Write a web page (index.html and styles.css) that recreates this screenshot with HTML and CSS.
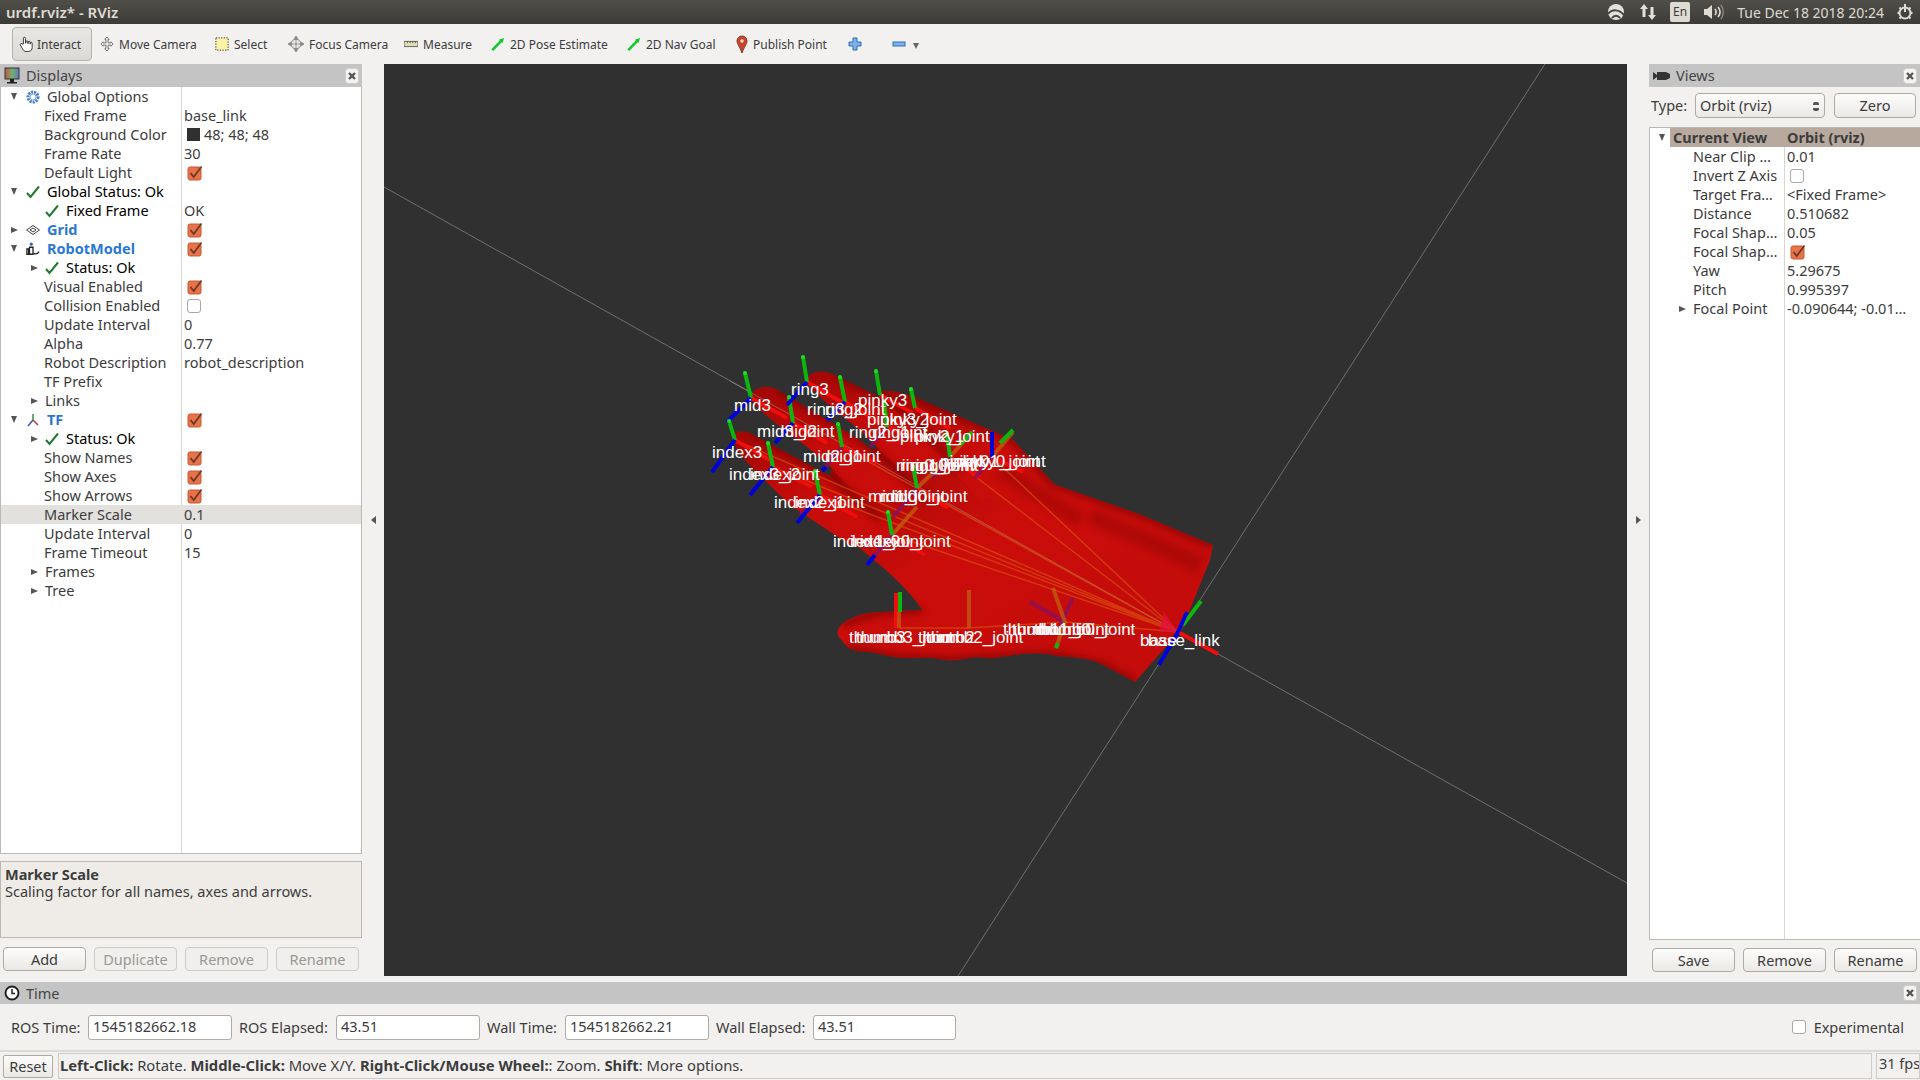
FILE: index.html
```html
<!DOCTYPE html>
<html lang="en">
<head>
<meta charset="utf-8">
<title>urdf.rviz* - RViz</title>
<link rel="stylesheet" href="styles.css">
</head>
<body>
<svg class="defs" aria-hidden="true">
  <symbol id="ok" viewBox="0 0 14 14"><path d="M1 8l3.5 4L13 1.5" fill="none" stroke="#1f7a2e" stroke-width="2"/></symbol>
  <symbol id="tick" viewBox="0 0 16 16"><rect x="1" y="2" width="13" height="13" rx="2" fill="#e8734a" stroke="#c9592f"/><path d="M3.5 8l3.2 4L14.5 1.5" fill="none" stroke="#6b3a28" stroke-width="1.8"/></symbol>
  <symbol id="cross" viewBox="0 0 14 16"><rect x=".5" y=".5" width="13" height="15" rx="3" fill="#f4f3f2" stroke="#d0cec9"/><path d="M4 5l6 6M10 5l-6 6" stroke="#555" stroke-width="2.4"/></symbol>
</svg>

<header class="topbar">
  <div class="wintitle">urdf.rviz* - RViz</div>
  <div class="tray">
    <svg class="t1" viewBox="0 0 18 18"><circle cx="9" cy="9" r="8" fill="#e4e1da"/><path d="M1 11c4-5 11-5 16 1M5 15c2-3 6-3 8 0" fill="none" stroke="#45433d" stroke-width="2"/></svg>
    <svg class="t2" viewBox="0 0 18 18"><path d="M5 1l4 5H6.500v8h-3V6H1zM13 17l4-5h-2.500V4h-3v8H9z" fill="#e4e1da"/></svg>
    <span class="lang">En</span>
    <svg class="t3" viewBox="0 0 22 18"><path d="M1 6h3l5-4v14l-5-4H1z" fill="#dfdbd2"/><path d="M12 6c1.500 2 1.500 4 0 6M15 4c2.500 3 2.500 7 0 10" fill="none" stroke="#dfdbd2" stroke-width="1.600"/><path d="M18 2c3 4 3 10 0 14" fill="none" stroke="#8a8780" stroke-width="1.400"/></svg>
    <span class="clock">Tue Dec 18 2018 20:24</span>
    <svg class="t4" viewBox="0 0 18 18"><circle cx="9" cy="10" r="5.500" fill="none" stroke="#dfdbd2" stroke-width="2"/><path d="M9 1v8M1.500 10h2M14.500 10h2M3.500 4.500l1.500 1.500M14.500 4.500L13 6M3.500 15.500L5 14M14.500 15.500L13 14" stroke="#dfdbd2" stroke-width="2"/></svg>
  </div>
</header>

<nav class="toolbar">
  <div class="tool active"><svg class="ic" viewBox="0 0 16 18"><path d="M5 9V2.500a1.200 1.200 0 0 1 2.400 0V8h.5V6.500a1.100 1.100 0 0 1 2.200 0V8.500h.4V7a1.100 1.100 0 0 1 2.200 0v2h.3V8a1 1 0 0 1 2 0v5c0 2.500-1.500 4.500-4 4.500H8c-2 0-3-1-4-3L1.500 10c-.6-1.200 1.200-2.200 2-1z" fill="#fff" stroke="#222"/></svg>Interact</div>
  <div class="tool"><svg class="ic" viewBox="0 0 16 18"><path d="M8 1l2.500 3H9.200v3.700h3.300V6.500L15 9l-2.500 2.500v-1.200H9.200V14h1.300L8 17l-2.500-3h1.300v-3.700H3.500v1.200L1 9l2.500-2.500v1.200h3.300V4H5.500z" fill="#eee" stroke="#666"/></svg>Move Camera</div>
  <div class="tool"><svg class="ic" viewBox="0 0 16 16"><rect x="1" y="1" width="14" height="14" fill="#fbf3a8" stroke="#222" stroke-dasharray="1.500 1.500"/></svg>Select</div>
  <div class="tool"><svg class="ic wide" viewBox="0 0 18 18"><circle cx="9" cy="9" r="5.500" fill="#e8e8e8" stroke="#777"/><path d="M9 0l2 3H7zM9 18l2-3H7zM0 9l3-2v4zM18 9l-3-2v4zM9 3v12M3 9h12" fill="#999" stroke="#777" stroke-width=".8"/></svg>Focus Camera</div>
  <div class="tool"><svg class="ic" viewBox="0 0 16 16"><rect x="0" y="5" width="16" height="6" fill="#e3dcae" stroke="#555"/><path d="M4 5v2M7 5v2M10 5v2M13 5v2" stroke="#555"/></svg>Measure</div>
  <div class="tool"><svg class="ic" viewBox="0 0 16 16"><path d="M1.500 15L13 3" stroke="#12c928" stroke-width="3"/><path d="M15 1l-2 6-4-4z" fill="#12c928"/></svg>2D Pose Estimate</div>
  <div class="tool"><svg class="ic" viewBox="0 0 16 16"><path d="M1.500 15L13 3" stroke="#12c928" stroke-width="3"/><path d="M15 1l-2 6-4-4z" fill="#12c928"/></svg>2D Nav Goal</div>
  <div class="tool"><svg class="ic narrow" viewBox="0 0 12 18"><path d="M6 18C4 12 1 9 1 6a5 5 0 0 1 10 0c0 3-3 6-5 12z" fill="#c8452d" stroke="#8a3a22"/><circle cx="6" cy="6" r="1.800" fill="#f5d5c5"/></svg>Publish Point</div>
  <div class="tool"><svg class="ic" viewBox="0 0 14 14"><path d="M5 1h4v4h4v4H9v4H5V9H1V5h4z" fill="#7fb0e8" stroke="#2f6fb8"/></svg></div>
  <div class="tool"><svg class="ic" viewBox="0 0 14 14"><rect x="1" y="5" width="12" height="4" fill="#7fb0e8" stroke="#2f6fb8"/></svg><i class="caret"></i></div>
</nav>

<main class="main">
  <section class="side left">
    <div class="dock"><svg class="dicon" viewBox="0 0 16 18"><rect x="1" y="1" width="14" height="11" fill="url(#mon)" stroke="#333"/><defs><linearGradient id="mon"><stop offset="0" stop-color="#c9504a"/><stop offset=".5" stop-color="#6fb46a"/><stop offset="1" stop-color="#6a72c0"/></linearGradient></defs><path d="M6 12h4v3h3v1.500H3V15h3z" fill="#222"/></svg><span>Displays</span><svg class="close"><use href="#cross"/></svg></div>
    <div class="tree disp">
      <div class="row"><div class="nm l0"><i class="exp down"></i><span class="ib"><svg class="ti" viewBox="0 0 14 14"><circle cx="7" cy="7" r="5" fill="none" stroke="#3f79c9" stroke-width="3" stroke-dasharray="2 1"/><circle cx="7" cy="7" r="3" fill="none" stroke="#7aa7e0"/></svg></span>Global Options</div><div class="val"></div></div>
      <div class="row"><div class="nm prop">Fixed Frame</div><div class="val">base_link</div></div>
      <div class="row"><div class="nm prop">Background Color</div><div class="val"><i class="swatch"></i>48; 48; 48</div></div>
      <div class="row"><div class="nm prop">Frame Rate</div><div class="val">30</div></div>
      <div class="row"><div class="nm prop">Default Light</div><div class="val"><svg class="chk"><use href="#tick"/></svg></div></div>
      <div class="row"><div class="nm l0 st"><i class="exp down"></i><span class="ib"><svg class="ti"><use href="#ok"/></svg></span>Global Status: Ok</div><div class="val"></div></div>
      <div class="row"><div class="nm l1 st"><i class="exp"></i><span class="ib"><svg class="ti"><use href="#ok"/></svg></span>Fixed Frame</div><div class="val">OK</div></div>
      <div class="row"><div class="nm l0 disp-name"><i class="exp right"></i><span class="ib"><svg class="ti" viewBox="0 0 14 14"><path d="M7 2.500L13.500 7 7 11.500.5 7zM7 5L10 7 7 9 4 7z" fill="none" stroke="#444"/></svg></span>Grid</div><div class="val"><svg class="chk"><use href="#tick"/></svg></div></div>
      <div class="row"><div class="nm l0 disp-name"><i class="exp down"></i><span class="ib"><svg class="ti" viewBox="0 0 16 16"><circle cx="6" cy="2.500" r="1.800" fill="#3f5fb0"/><path d="M4 6h4v8H4zM1 14V8h2v6zM9 13c2 1 4 1 6-2" fill="none" stroke="#222" stroke-width="1.500"/></svg></span>RobotModel</div><div class="val"><svg class="chk"><use href="#tick"/></svg></div></div>
      <div class="row"><div class="nm l1 st"><i class="exp right"></i><span class="ib"><svg class="ti"><use href="#ok"/></svg></span>Status: Ok</div><div class="val"></div></div>
      <div class="row"><div class="nm prop">Visual Enabled</div><div class="val"><svg class="chk"><use href="#tick"/></svg></div></div>
      <div class="row"><div class="nm prop">Collision Enabled</div><div class="val"><i class="box"></i></div></div>
      <div class="row"><div class="nm prop">Update Interval</div><div class="val">0</div></div>
      <div class="row"><div class="nm prop">Alpha</div><div class="val">0.77</div></div>
      <div class="row"><div class="nm prop">Robot Description</div><div class="val">robot_description</div></div>
      <div class="row"><div class="nm prop">TF Prefix</div><div class="val"></div></div>
      <div class="row"><div class="nm l1"><i class="exp right"></i>Links</div><div class="val"></div></div>
      <div class="row"><div class="nm l0 disp-name"><i class="exp down"></i><span class="ib"><svg class="ti" viewBox="0 0 14 14"><path d="M7 7V1" stroke="#2a9a3a" stroke-width="1.500"/><path d="M7 7l5 5" stroke="#d0342c" stroke-width="1.500"/><path d="M7 7l-5 6" stroke="#3255c8" stroke-width="1.500"/></svg></span>TF</div><div class="val"><svg class="chk"><use href="#tick"/></svg></div></div>
      <div class="row"><div class="nm l1 st"><i class="exp right"></i><span class="ib"><svg class="ti"><use href="#ok"/></svg></span>Status: Ok</div><div class="val"></div></div>
      <div class="row"><div class="nm prop">Show Names</div><div class="val"><svg class="chk"><use href="#tick"/></svg></div></div>
      <div class="row"><div class="nm prop">Show Axes</div><div class="val"><svg class="chk"><use href="#tick"/></svg></div></div>
      <div class="row"><div class="nm prop">Show Arrows</div><div class="val"><svg class="chk"><use href="#tick"/></svg></div></div>
      <div class="row sel"><div class="nm prop">Marker Scale</div><div class="val">0.1</div></div>
      <div class="row"><div class="nm prop">Update Interval</div><div class="val">0</div></div>
      <div class="row"><div class="nm prop">Frame Timeout</div><div class="val">15</div></div>
      <div class="row"><div class="nm l1"><i class="exp right"></i>Frames</div><div class="val"></div></div>
      <div class="row"><div class="nm l1"><i class="exp right"></i>Tree</div><div class="val"></div></div>
    </div>
    <div class="desc"><b>Marker Scale</b><br>Scaling factor for all names, axes and arrows.</div>
    <div class="btns four"><button class="btn">Add</button><button class="btn off">Duplicate</button><button class="btn off">Remove</button><button class="btn off">Rename</button></div>
  </section>

  <div class="gutter"><i class="tri-l"></i></div>

  <div class="view">
    <svg class="scene" viewBox="384 64 1243 912">
      <defs>
        <linearGradient id="palm" x1="0.1" y1="0.1" x2="0.7" y2="0.8"><stop offset="0" stop-color="#a80a08"/><stop offset=".5" stop-color="#cb0d0a"/><stop offset="1" stop-color="#c40c0a"/></linearGradient>
        <linearGradient id="fing" x1="0" y1="0" x2="1" y2="1"><stop offset="0" stop-color="#a00806"/><stop offset=".5" stop-color="#c60c09"/><stop offset="1" stop-color="#cb0d0a"/></linearGradient>
        <filter id="soft"><feGaussianBlur stdDeviation="3.500"/></filter>
        <filter id="soft2"><feGaussianBlur stdDeviation=".4"/></filter>
        <clipPath id="handclip">
          <path d="M830 472L930 420L1013 440L1053 484L1139 514L1213 545L1210 560L1183 627L1135 682L1103 665C1085 655 1060 658 1053 655C1020 650 1000 660 987 658C970 655 960 662 945 660C925 655 915 660 893 657L870 652C855 652 847 650 842 640C836 636 836 630 842 624C855 614 870 612 880 612L922 610C915 598 898 580 880 565L850 540Z"/>
          <path d="M733 437C735 430 745 430 752 434L830 476L905 540L850 545L790 505C765 480 745 462 737 450Z"/>
          <path d="M751 396C755 385 770 385 778 390L860 440L930 500L860 500L827 463C800 440 775 425 755 405Z"/>
          <path d="M807 378C812 370 825 370 835 375L905 410L960 470L900 470L860 430C835 410 815 395 808 382Z"/>
          <path d="M878 393C885 388 900 392 915 397L1013 440L1060 490L980 500L925 440Z"/>
        </clipPath>
      </defs>
      <path class="grid" d="M384 187L1627 883M1545 64L958 976"/>
      <path fill="url(#palm)" d="M830 472L930 420L1013 440L1053 484L1139 514L1213 545L1210 560L1183 627L1135 682L1103 665C1085 655 1060 658 1053 655C1020 650 1000 660 987 658C970 655 960 662 945 660C925 655 915 660 893 657L870 652C855 652 847 650 842 640C836 636 836 630 842 624C855 614 870 612 880 612L922 610C915 598 898 580 880 565L850 540Z"/>
      <path fill="url(#fing)" d="M733 437C735 430 745 430 752 434L830 476L905 540L850 545L790 505C765 480 745 462 737 450Z"/>
      <path fill="url(#fing)" d="M751 396C755 385 770 385 778 390L860 440L930 500L860 500L827 463C800 440 775 425 755 405Z"/>
      <path fill="url(#fing)" d="M807 378C812 370 825 370 835 375L905 410L960 470L900 470L860 430C835 410 815 395 808 382Z"/>
      <path fill="url(#fing)" d="M878 393C885 388 900 392 915 397L1013 440L1060 490L980 500L925 440Z"/>
      <g clip-path="url(#handclip)">
        <g class="shade" filter="url(#soft)">
          <path d="M752 434L830 476L880 520M778 390L860 440L930 500M835 375L905 410L960 470M915 397L1013 440L1053 484L1139 514L1213 545"/>
          <path d="M847 648L893 657L953 660L1053 655L1103 665L1135 682M842 624L880 612L922 610"/>
          <path class="band" d="M1090 515L1200 565M1000 470L1080 520"/>
        </g>
      </g>
      <path class="grid over" d="M730 381L1178 632"/>
      <g class="links">
        <path d="M1178 632L735 440M1178 632L773 467M1178 632L820 495M1178 632L892 535M1178 632L842 447M1178 632L917 488M1178 632L950 457M1178 632L992 457M1178 632L1065 622M1065 622L968 628L899 628"/>
      </g>
      <path class="fan" d="M1178 632L1164 612L1159 632Z"/>
      <g class="fr" filter="url(#soft2)">
        <g class="r"><path d="M735 440L770 460M751 398L787 418M807 382L843 403M773 467L812 487M793 423L827 443M845 402L880 423M880 395L913 413M820 495L857 517M842 447L877 463M887 427L920 440M915 408L950 428M950 457L980 477M992 457L1023 472M917 488L948 508M892 535L925 555M1178 632L1218 654M896 593V628"/></g>
        <g class="m"><path d="M820 495L800 515M842 447L825 467M887 427L870 447M950 457L932 478M992 457L975 478M917 488L893 517M892 535L875 555M1073 598L1060 625M1065 622L1030 602"/></g>
        <g class="o"><path d="M917 488L943 463M892 535L917 507M950 457L972 432M992 457L1013 432M969 590V628M899 628V612M1053 588L1065 622L1056 648"/></g>
        <g class="g"><path d="M735 440L729 421M751 398L745 373M807 382L803 357M773 467L768 443M793 423L789 397M845 402L840 377M880 395L876 371M820 495L815 471M842 447L838 424M887 427L884 401M915 408L911 389M950 457L947 434M960 445L972 432M1000 443L1013 430M917 488L913 466M892 535L888 512M900 612V592M1058 643L1056 648M1183 625L1201 601"/></g>
        <g class="b"><path d="M735 440L712 472M751 398L727 422M807 382L787 405M773 467L750 495M793 423L775 443M845 402L827 420M820 495L797 523M826 467L822 471M875 555L867 565M992 457V432M1178 632L1159 665M1178 632L1187 612"/></g>
        <g class="gt"><circle cx="729" cy="421" r="2"/><circle cx="745" cy="373" r="2"/><circle cx="803" cy="357" r="2"/><circle cx="768" cy="443" r="2"/><circle cx="789" cy="397" r="2"/><circle cx="840" cy="377" r="2"/><circle cx="876" cy="371" r="2"/><circle cx="815" cy="471" r="2"/><circle cx="838" cy="424" r="2"/><circle cx="884" cy="401" r="2"/><circle cx="911" cy="389" r="2"/><circle cx="947" cy="434" r="2"/><circle cx="913" cy="466" r="2"/><circle cx="888" cy="512" r="2"/></g>
      </g>
      <g class="lab">
        <text x="712" y="458">index3</text><text x="734" y="411">mid3</text><text x="791" y="395">ring3</text><text x="858" y="406">pinky3</text>
        <text x="729" y="480">index3_joint</text><text x="750" y="480">index2</text>
        <text x="757" y="437">mid3_joint</text><text x="780" y="437">mid2</text>
        <text x="807" y="415">ring3_joint</text><text x="825" y="415">ring2</text>
        <text x="867" y="425">pinky3_joint</text><text x="880" y="425">pinky2</text>
        <text x="849" y="438">ring2_joint</text><text x="872" y="438">ring1</text>
        <text x="900" y="442">pinky2_joint</text><text x="915" y="442">pinky1</text>
        <text x="803" y="462">mid2_joint</text><text x="825" y="462">mid1</text>
        <text x="774" y="508">index2_joint</text><text x="795" y="508">index1</text>
        <text x="900" y="471">ring1_joint</text><text x="910" y="471">ring0</text><text x="896" y="471">ring0_joint</text>
        <text x="950" y="467">pinky1_joint</text><text x="940" y="467">pinky0</text><text x="956" y="467">pinky0_joint</text>
        <text x="868" y="502">mid1_joint</text><text x="880" y="502">mid0</text><text x="890" y="502">mid0_joint</text>
        <text x="833" y="547">index1_joint</text><text x="850" y="547">index0</text><text x="860" y="547">index0_joint</text>
        <text x="849" y="643">thumb3</text><text x="856" y="643">thumb3_joint</text><text x="918" y="643">thumb2</text><text x="926" y="643">thumb2_joint</text>
        <text x="1003" y="635">thumb1</text><text x="1012" y="635">thumb1_joint</text><text x="1034" y="635">thumb0</text><text x="1038" y="635">thumb0_joint</text>
        <text x="1148" y="646">base_link</text><text x="1140" y="646">base</text>
      </g>
    </svg>
  </div>

  <div class="gutter"><i class="tri-r"></i></div>

  <section class="side right">
    <div class="dock"><svg class="dicon cam" viewBox="0 0 17 10"><path d="M0 1l4 3V1h9l4 2v4l-4 2H4V6L0 9z" fill="#333"/></svg><span>Views</span><svg class="close"><use href="#cross"/></svg></div>
    <div class="typerow"><span>Type:</span><div class="combo">Orbit (rviz)<i class="spin"></i></div><button class="btn">Zero</button></div>
    <div class="tree vw">
      <div class="row head"><div class="nm hd"><i class="exp down"></i><b class="hdt">Current View</b></div><div class="val hv">Orbit (rviz)</div></div>
      <div class="row"><div class="nm vp">Near Clip …</div><div class="val">0.01</div></div>
      <div class="row"><div class="nm vp">Invert Z Axis</div><div class="val"><i class="box"></i></div></div>
      <div class="row"><div class="nm vp">Target Fra…</div><div class="val">&lt;Fixed Frame&gt;</div></div>
      <div class="row"><div class="nm vp">Distance</div><div class="val">0.510682</div></div>
      <div class="row"><div class="nm vp">Focal Shap…</div><div class="val">0.05</div></div>
      <div class="row"><div class="nm vp">Focal Shap…</div><div class="val"><svg class="chk"><use href="#tick"/></svg></div></div>
      <div class="row"><div class="nm vp">Yaw</div><div class="val">5.29675</div></div>
      <div class="row"><div class="nm vp">Pitch</div><div class="val">0.995397</div></div>
      <div class="row"><div class="nm vf"><i class="exp right"></i>Focal Point</div><div class="val">-0.090644; -0.01…</div></div>
    </div>
    <div class="btns three"><button class="btn">Save</button><button class="btn">Remove</button><button class="btn">Rename</button></div>
  </section>
</main>

<section class="time">
  <div class="dock"><svg class="dicon clk" viewBox="0 0 16 16"><circle cx="8" cy="8" r="6.500" fill="#fff" stroke="#222" stroke-width="2"/><path d="M8 4v4.500h3" fill="none" stroke="#222" stroke-width="1.500"/></svg><span>Time</span><svg class="close"><use href="#cross"/></svg></div>
  <div class="timerow">
    <span class="tl first">ROS Time:</span><div class="inp">1545182662.18</div>
    <span class="tl">ROS Elapsed:</span><div class="inp">43.51</div>
    <span class="tl">Wall Time:</span><div class="inp">1545182662.21</div>
    <span class="tl">Wall Elapsed:</span><div class="inp">43.51</div>
    <div class="exper"><i class="box"></i>Experimental</div>
  </div>
</section>

<footer class="status">
  <button class="btn reset">Reset</button>
  <div class="msg"><b>Left-Click:</b> Rotate. <b>Middle-Click:</b> Move X/Y. <b>Right-Click/Mouse Wheel:</b>: Zoom. <b>Shift</b>: More options.</div>
  <div class="fps">31 fps</div>
</footer>
</body>
</html>
```
FILE: styles.css
```css
* { box-sizing: border-box; }
html, body { margin: 0; height: 100%; }
body {
  width: 1920px; height: 1080px; overflow: hidden;
  background: #f2f1f0; color: #3c3c3c;
  font: 14.5px/19px "Noto Sans", sans-serif;
  display: flex; flex-direction: column;
}
.defs { position: absolute; width: 0; height: 0; }

.topbar {
  height: 24px; flex: none; display: flex; align-items: center; justify-content: space-between;
  background: linear-gradient(#504e48, #3c3b37); color: #dfdbd2;
  padding: 0 6px;
}
.wintitle { font-weight: 600; font-size: 15px; }
.tray { display: flex; align-items: center; }
.tray svg { height: 18px; }
.t1 { width: 18px; margin-right: 14px; }
.t2 { width: 18px; margin-right: 13px; }
.lang { width: 20px; height: 20px; background: #dfdbd2; color: #3c3b37; border-radius: 2px; font-size: 12px; line-height: 20px; text-align: center; margin-right: 13px; }
.t3 { width: 22px; margin-right: 12px; }
.clock { font-size: 14px; margin-right: 12px; }
.t4 { width: 18px; }

.toolbar {
  height: 40px; flex: none; padding-left: 12px; display: grid; align-items: center;
  grid-template-columns: 88px 115px 73px 116px 87px 136px 109px 112px 44px 30px;
}
.tool { display: flex; align-items: center; white-space: nowrap; font-size: 12px; gap: 5px; }
.tool.active {
  width: 80px; height: 34px; padding-left: 6px; gap: 4px;
  border: 1px solid #b5b2ac; border-radius: 4px; background: linear-gradient(#e9e7e4, #dcdad6);
}
.ic { width: 14px; height: 16px; flex: none; }
.ic.wide { width: 16px; height: 18px; }
.ic.narrow { width: 12px; height: 18px; }
.caret { width: 0; height: 0; border: 3.500px solid transparent; border-top: 6px solid #666; border-bottom: 0; margin: 4px 0 0 2px; }

.main { height: 912px; flex: none; display: flex; }
.side { flex: none; display: flex; flex-direction: column; }
.side.left { width: 362px; }
.side.right { width: 271px; }
.gutter { width: 22px; flex: none; display: flex; align-items: center; justify-content: center; }
.tri-l, .tri-r { width: 0; height: 0; border: 4px solid transparent; }
.tri-l { border-right: 5px solid #555; border-left: 0; }
.tri-r { border-left: 5px solid #555; border-right: 0; }
.view { width: 1243px; flex: none; background: #303030; }
.scene { display: block; width: 1243px; height: 912px; }

.dock { height: 23px; flex: none; background: #c4c4c4; display: flex; align-items: center; padding-left: 4px; color: #444; font-size: 14.5px; }
.dock span { margin-left: 6px; }
.close { width: 14px; height: 16px; margin-left: auto; margin-right: 3px; }
.dicon { width: 16px; height: 18px; flex: none; }
.dicon.cam { height: 10px; width: 17px; }
.dicon.clk { width: 16px; height: 16px; }

.tree { background: #fff; border: 1px solid #bcb9b4; border-top: 0; }
.tree.disp { height: 767px; background: linear-gradient(#d9d7d3, #d9d7d3) 180px 0/1px 100% no-repeat, #fff; }
.tree.vw { height: 813px; margin-top: 9px; border-top: 1px solid #bcb9b4; border-right: 0; background: linear-gradient(#d9d7d3, #d9d7d3) 134px 0/1px 100% no-repeat, #fff; }
.row { height: 19px; display: flex; white-space: nowrap; }
.row.sel { background: #e3e1de; }
.disp .nm { width: 181px; flex: none; display: flex; align-items: center; }
.disp .val { padding-left: 2px; display: flex; align-items: center; }
.prop { padding-left: 43px; }
.l0 { padding-left: 10px; }
.l1 { padding-left: 30px; }
.exp { display: block; flex: none; width: 15px; }
.l1 .exp { width: 14px; }
.exp.down::before { content: ""; display: block; width: 0; height: 0; border: 3.500px solid transparent; border-top: 7px solid #555; border-bottom: 0; }
.exp.right::before { content: ""; display: block; width: 0; height: 0; border: 3.500px solid transparent; border-left: 7px solid #555; border-right: 0; }
.ib { width: 21px; flex: none; display: flex; align-items: center; }
.l1 .ib { width: 21px; }
.ti { width: 14px; height: 14px; }
.st { color: #000; }
.disp-name { color: #2a78d2; font-weight: 700; }
.swatch { width: 13px; height: 13px; background: #303030; margin: 0 4px 0 3px; flex: none; }
.chk { width: 16px; height: 16px; margin-left: 3px; display: block; flex: none; }
.box { display: block; width: 14px; height: 14px; border: 1px solid #aaa8a3; border-radius: 3px; background: #fff; flex: none; }
.disp .val .box { margin-left: 3px; }

.desc { height: 77px; margin-top: 7px; flex: none; background: #efece8; border: 1px solid #bcb9b4; padding: 4px 4px; line-height: 17px; }
.desc b { font-weight: 700; }
.btns { display: flex; flex: none; }
.btns.four { margin-top: 9px; padding-left: 3px; gap: 8px; }
.btns.four .btn { width: 83px; }
.btns.three { margin-top: 8px; padding-left: 3px; gap: 8px; }
.btns.three .btn { width: 83px; }
.btn {
  height: 24px; padding: 0; font: inherit; color: #3c3c3c;
  border: 1px solid #aeaaa4; border-radius: 4px; background: linear-gradient(#fcfcfb, #ebe9e6);
}
.btn.off { color: #9a9894; border-color: #cfccc8; background: #f0efed; }

.typerow { display: flex; align-items: center; height: 25px; margin-top: 6px; padding-left: 2px; }
.typerow span { width: 44px; flex: none; }
.combo { width: 130px; height: 25px; flex: none; border: 1px solid #aeaaa4; border-radius: 4px; padding: 2px 4px; background: linear-gradient(#fcfcfb, #ebe9e6); position: relative; }
.spin { position: absolute; right: 5px; top: 8px; width: 6px; height: 9px; border-top: 3px solid #555; border-bottom: 3px solid #555; border-radius: 2px; }
.typerow .btn { width: 82px; height: 25px; margin-left: 9px; }
.vw .nm { width: 135px; flex: none; display: flex; align-items: center; }
.vw .val { padding-left: 2px; display: flex; align-items: center; flex: 1; }
.vw .chk, .vw .box { margin-left: 3px; }
.vp { padding-left: 43px; }
.vf { padding-left: 29px; }
.vf .exp { width: 14px; }
.hd { padding-left: 9px; }
.hd .exp { width: 11px; }
.hdt { flex: 1; background: #b8a99e; height: 19px; padding-left: 3px; }
.hv { background: #b8a99e; font-weight: 700; }

.time { height: 68px; flex: none; margin-top: 6px; }
.time .dock { height: 22px; }
.timerow {
  height: 46px; display: grid; align-items: center; padding-left: 11px; white-space: nowrap;
  grid-template-columns: 77px 144px 104px 144px 85px 144px 104px 143px 1fr;
}
.tl { padding-left: 7px; }
.tl.first { padding-left: 0; }
.inp { height: 25px; border: 1px solid #aeaaa4; border-radius: 3px; background: #fff; padding: 1px 4px; }
.exper { display: flex; align-items: center; justify-content: flex-end; gap: 8px; padding-right: 16px; }

.status { height: 30px; flex: none; border-top: 2px solid #dcdad6; display: flex; align-items: center; padding: 1px 0 1px 3px; }
.btn.reset { width: 50px; height: 23px; flex: none; border-radius: 2px; }
.msg { width: 1814px; height: 26px; margin-left: 5px; border: 1px solid #cfccc8; padding: 2px 0 0 1px; flex: none; white-space: nowrap; font-size: 14.8px; }
.msg b { font-weight: 700; }
.fps { flex: 1; height: 26px; margin-left: 4px; border: 1px solid #cfccc8; padding-left: 2px; white-space: nowrap; overflow: hidden; }

.grid { stroke: #6f6f6f; stroke-width: 1; fill: none; }
.grid.over { stroke: #a0a0a0; opacity: .5; }
.shade { fill: none; stroke: #6e0403; stroke-width: 7; opacity: .6; }
.shade .band { stroke-width: 16; opacity: .45; }
.links { stroke: #e0560f; stroke-width: 1.5; fill: none; opacity: .6; }
.fan { fill: #e0103a; opacity: .8; }
.fr { fill: none; stroke-width: 4; }
.fr .r { stroke: #f00a0a; }
.fr .m { stroke: #8a1060; opacity: .8; }
.fr .o { stroke: #c0640c; opacity: .7; }
.fr .g { stroke: #0fb50f; }
.fr .b { stroke: #0606d8; }
.gt { fill: #1ee01e; stroke: none; }
.lab text { font: 17px "Liberation Sans", sans-serif; fill: #fff; }
```
